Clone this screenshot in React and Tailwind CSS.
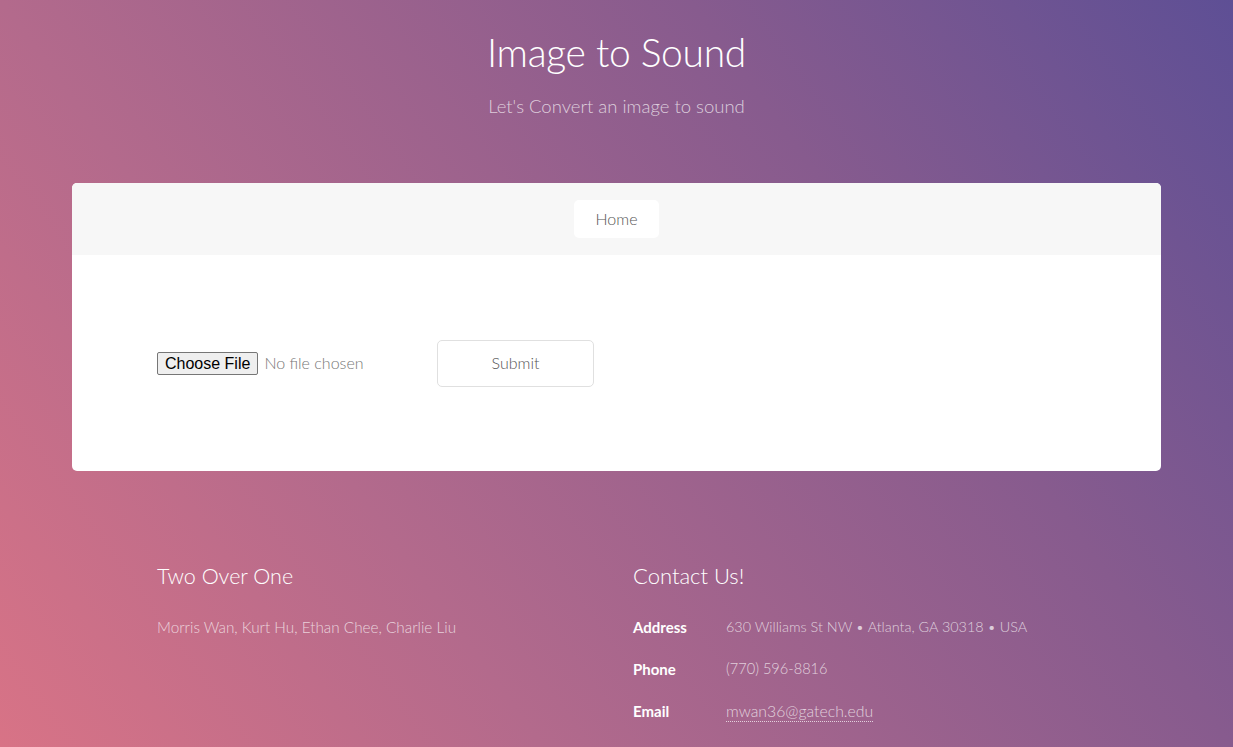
import React from "react";

const FONT = "font-['Lato','Open_Sans',sans-serif]";

export default function App() {
  return (
    <div
      className={`min-h-screen w-full bg-fixed bg-[linear-gradient(54deg,#d87386_0%,#b36a8c_30.6%,#875b8e_69.4%,#5e4f95_100%)] ${FONT} font-light text-white`}
    >
      {/* HEADER */}
      <header className="flex flex-col items-center pt-[28px]">
        <h1 className="text-[39px] leading-[48px] font-light tracking-[-0.3px]">Image to Sound</h1>
        <p className="mt-[18px] text-[18.5px] leading-[24px] text-white/70">Let's Convert an image to sound</p>
      </header>

      {/* MAIN CARD */}
      <main className="mx-[72px] mt-[65px] overflow-hidden rounded-[5px] bg-white">
        <nav className="flex h-[72px] items-center justify-center bg-[#f7f7f7]">
          <a className="flex h-[38px] w-[85px] items-center justify-center rounded-[5px] bg-white text-[16px] text-[#555]">
            Home
          </a>
        </nav>

        <section className="flex h-[216px] items-center px-[85px]">
          <input
            type="file"
            className="w-[280px] text-[16px] text-[#777] file:mr-[6px] file:rounded-[2px] file:border file:border-[#767676] file:bg-[#efefef] file:px-[7px] file:py-[1px] file:font-['Liberation_Sans',Arial,sans-serif] file:text-[16px] file:leading-[19px] file:text-black"
          />
          <button className="h-[47px] w-[157px] rounded-[5px] border border-[#e0e0e0] bg-white text-[16px] text-[#555]">
            Submit
          </button>
        </section>
      </main>

      {/* FOOTER */}
      <footer className="flex px-[157px] pt-[89px] pb-[24px]">
        <div className="w-[476px]">
          <h2 className="text-[21.5px] leading-[32px]">Two Over One</h2>
          <p className="mt-[23px] text-[15.3px] leading-[24px] text-white/70">
            Morris Wan, Kurt Hu, Ethan Chee, Charlie Liu
          </p>
        </div>
        <div className="flex-1">
          <h2 className="text-[22px] leading-[32px]">Contact Us!</h2>
          <dl className="mt-[23px] grid grid-cols-[93px_1fr] gap-y-[18px] text-[15px] leading-[24px]">
            <dt className="font-bold">Address</dt>
            <dd className="text-[14.4px] text-white/70">630 Williams St NW • Atlanta, GA 30318 • USA</dd>
            <dt className="font-bold">Phone</dt>
            <dd className="text-[14.6px] text-white/70">(770) 596-8816</dd>
            <dt className="font-bold">Email</dt>
            <dd>
              <a className="border-b border-dotted border-white/70 pb-[1px] text-[15.8px] text-white/70">mwan36@gatech.edu</a>
            </dd>
          </dl>
        </div>
      </footer>
    </div>
  );
}
